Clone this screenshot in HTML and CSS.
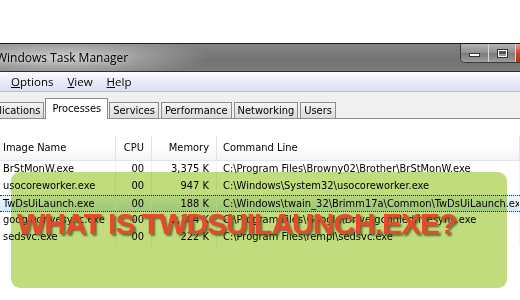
FILE: index.html
```html
<!DOCTYPE html>
<html lang="en">
<head>
  <meta charset="UTF-8" />
  <title>What is TwDsUiLaunch.exe?</title>
  <link rel="stylesheet" href="styles.css">
</head>
<body>
  <div class="screen">
    <div class="window">
      <div class="titlebar">
        <span class="title">Windows Task Manager</span>
        <div class="caps">
          <span class="cap min"><i></i></span>
          <span class="cap max"><i></i></span>
          <span class="cap close"></span>
        </div>
      </div>
      <div class="menubar">
        <span><u>O</u>ptions</span>
        <span><u>V</u>iew</span>
        <span><u>H</u>elp</span>
      </div>
      <div class="body">
        <div class="tabs">
          <span class="tab first">Applications</span>
          <span class="tab active">Processes</span>
          <span class="tab">Services</span>
          <span class="tab">Performance</span>
          <span class="tab">Networking</span>
          <span class="tab">Users</span>
        </div>
        <div class="panel">
          <div class="list">
            <div class="row head">
              <span class="c-name">Image Name</span>
              <span class="c-cpu">CPU</span>
              <span class="c-mem">Memory</span>
              <span class="c-cmd">Command Line</span>
            </div>
            <div class="row">
              <span class="c-name">BrStMonW.exe</span>
              <span class="c-cpu">00</span>
              <span class="c-mem">3,375 K</span>
              <span class="c-cmd">C:\Program Files\Browny02\Brother\BrStMonW.exe</span>
            </div>
            <div class="row">
              <span class="c-name">usocoreworker.exe</span>
              <span class="c-cpu">00</span>
              <span class="c-mem">947 K</span>
              <span class="c-cmd">C:\Windows\System32\usocoreworker.exe</span>
            </div>
            <div class="row selected">
              <span class="c-name">TwDsUiLaunch.exe</span>
              <span class="c-cpu">00</span>
              <span class="c-mem">188 K</span>
              <span class="c-cmd">C:\Windows\twain_32\Brimm17a\Common\TwDsUiLaunch.exe</span>
            </div>
            <div class="row">
              <span class="c-name">googledrivesync.exe</span>
              <span class="c-cpu">00</span>
              <span class="c-mem">2,184 K</span>
              <span class="c-cmd">C:\Program Files\Google\Drive\googledrivesync.exe</span>
            </div>
            <div class="row">
              <span class="c-name">sedsvc.exe</span>
              <span class="c-cpu">00</span>
              <span class="c-mem">222 K</span>
              <span class="c-cmd">C:\Program Files\rempl\sedsvc.exe</span>
            </div>
          </div>
        </div>
      </div>
    </div>
    <div class="overlay"></div>
    <div class="headline">WHAT IS TWDSUILAUNCH.EXE?</div>
  </div>
</body>
</html>
```

FILE: styles.css
```css
* {
  box-sizing: border-box;
}
body {
  margin: 0;
  background: #fff;
  color: #000;
  font-family: "DejaVu Sans Condensed", "DejaVu Sans", sans-serif;
  font-stretch: condensed;
  font-size: 11px;
}
.screen {
  position: relative;
  width: 520px;
  height: 300px;
  overflow: hidden;
  padding-top: 43px;
}
.titlebar {
  height: 29px;
  display: flex;
  justify-content: space-between;
  align-items: flex-start;
  border-top: 1px solid #1a1a1a;
  border-bottom: 1px solid #2f2f2f;
  background:
    radial-gradient(ellipse 150px 22px at 60px 50%, rgba(205, 205, 205, 0.95), rgba(205, 205, 205, 0)),
    linear-gradient(#858585, #727272 60%, #7c7c7c);
}
.title {
  margin-left: -4px;
  font-family: "Open Sans", sans-serif;
  font-stretch: normal;
  font-size: 12px;
  line-height: 27px;
  text-shadow: 0 0 6px rgba(255, 255, 255, 0.8);
}
.caps {
  display: flex;
  height: 19px;
  margin-right: -43px;
  border: 1px solid #3a3a3a;
  border-top: none;
  border-radius: 0 0 0 5px;
  overflow: hidden;
}
.cap {
  width: 27px;
  display: flex;
  align-items: center;
  justify-content: center;
  border-left: 1px solid #d8d8d8;
  background: linear-gradient(#b4b4b4, #8e8e8e 50%, #7a7a7a 52%, #9c9c9c);
}
.cap:first-child {
  border-left: none;
}
.min i {
  width: 11px;
  height: 4px;
  margin-top: 4px;
  background: #fff;
  border: 1px solid #333;
}
.max i {
  width: 11px;
  height: 9px;
  border: 1px solid #333;
  background: #9a9a9a;
  box-shadow: inset 0 0 0 1px #fff, inset 0 3px 0 1px #555;
}
.cap.close {
  width: 47px;
  background: linear-gradient(#e6a393, #c9472f 50%, #b5301b);
}
.menubar {
  height: 20px;
  display: flex;
  padding-left: 4px;
  border-bottom: 1px solid #b9bfcd;
  background: linear-gradient(#fcfdfe, #e9edf8 45%, #dbe1f1);
  font-family: "Open Sans", sans-serif;
  font-stretch: normal;
  font-size: 11.5px;
  line-height: 20px;
}
.menubar span {
  padding: 0 7px;
}
.body {
  background: #f0f0f0;
}
.tabs {
  height: 27px;
  display: flex;
  align-items: flex-end;
  gap: 2px;
  border-bottom: 1px solid #898c95;
}
.tab {
  height: 16px;
  padding: 0 3px;
  line-height: 15px;
  border: 1px solid #898c95;
  border-bottom: none;
  background: linear-gradient(#f6f6f6, #e6e6e6 50%, #dcdcdc);
  white-space: nowrap;
}
.tab.first {
  margin-left: -24px;
}
.tab.active {
  height: 21px;
  margin: 0 -1px -1px;
  padding: 0 6px;
  line-height: 19px;
  background: #fff;
  position: relative;
}
.panel {
  background: #fff;
  padding-top: 17px;
  height: 181px;
}
.row {
  display: grid;
  grid-template-columns: 116px 36px 65px 1fr;
  height: 17px;
  line-height: 16px;
  white-space: nowrap;
}
.row span {
  border-right: 1px solid #f1f1f1;
  overflow: hidden;
}
.row.head {
  height: 25px;
  line-height: 24px;
  border-bottom: 1px solid #e3e4e7;
  background: linear-gradient(#fff, #fff 45%, #f2f4f7);
}
.row.head span {
  border-right-color: #e3e4e7;
}
.row.selected {
  border-top: 1px dotted #333;
  border-bottom: 1px dotted #333;
  line-height: 15px;
  background: linear-gradient(#eef6fd, #d3e8f8);
}
.c-name {
  padding-left: 3px;
}
.c-cpu,
.c-mem {
  text-align: right;
  padding-right: 7px;
}
.c-cmd {
  padding-left: 6px;
}
.overlay {
  position: absolute;
  left: 11px;
  top: 172px;
  width: 496px;
  height: 116px;
  border-radius: 9px;
  background: #c0dc7c;
  mix-blend-mode: multiply;
}
.headline {
  position: absolute;
  left: 17px;
  top: 209px;
  font-family: "Liberation Sans", Arial, sans-serif;
  font-stretch: normal;
  font-weight: 700;
  font-size: 30px;
  line-height: 30px;
  letter-spacing: -1px;
  color: #e8492b;
  text-shadow: 2px 2px 2px rgba(70, 80, 30, 0.75);
  white-space: nowrap;
}
```
